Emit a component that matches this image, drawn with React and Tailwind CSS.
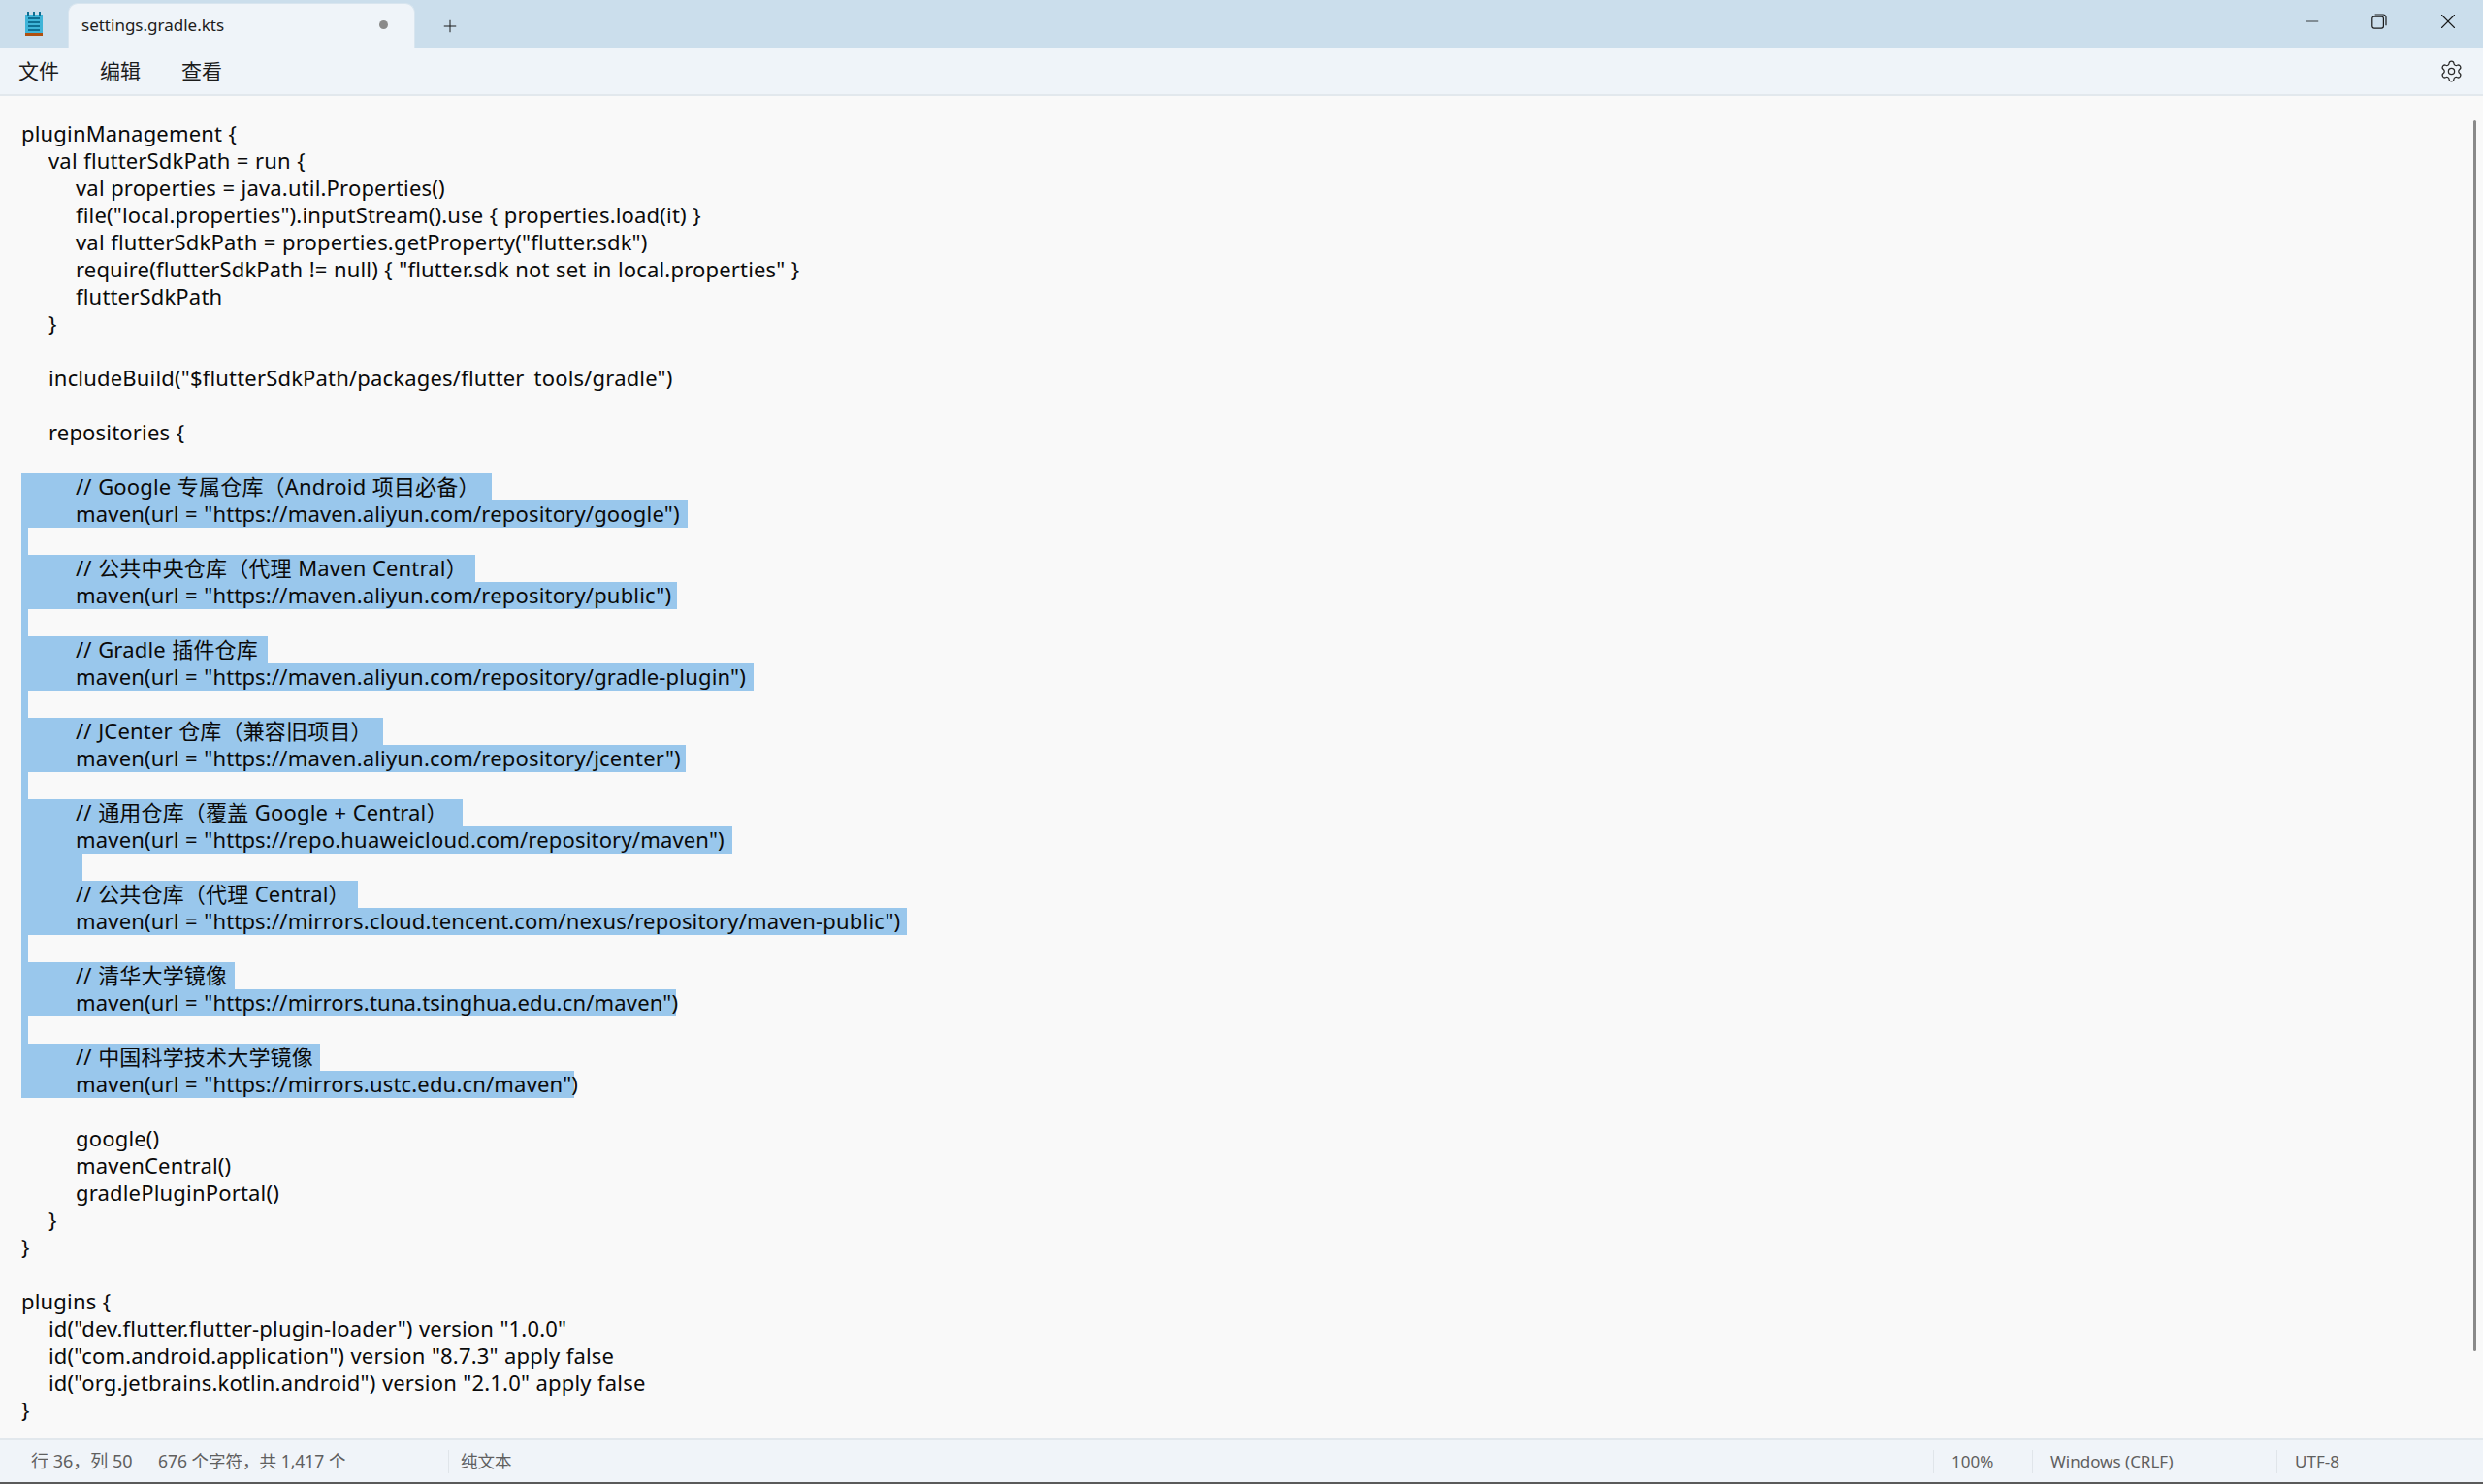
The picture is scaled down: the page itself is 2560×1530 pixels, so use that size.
import React from 'react'
import { Settings, Plus, X, Minus } from 'lucide-react'

const uiFont = "font-['Noto_Sans','Noto_Sans_CJK_SC',sans-serif]"

const firstLines = [
  ['', 'pluginManagement {'],
  ['pl-7', 'val flutterSdkPath = run {'],
  ['pl-14', 'val properties = java.util.Properties()'],
  ['pl-14', 'file("local.properties").inputStream().use { properties.load(it) }'],
  ['pl-14', 'val flutterSdkPath = properties.getProperty("flutter.sdk")'],
  ['pl-14', 'require(flutterSdkPath != null) { "flutter.sdk not set in local.properties" }'],
  ['pl-14', 'flutterSdkPath'],
  ['pl-7', '}'],
  ['', ''],
  [
    'pl-7',
    <>
      includeBuild("$flutterSdkPath/packages/flutter<span className="text-transparent">_</span>tools/gradle")
    </>,
  ],
  ['', ''],
  ['pl-7', 'repositories {'],
  ['', ''],
]

// selected block: the width of each line is the selection highlight in the screenshot
const selectedLines = [
  ['w-[485px]', '// Google 专属仓库（Android 项目必备）'],
  ['w-[687px]', 'maven(url = "https://maven.aliyun.com/repository/google")'],
  ['w-[7px]', ''],
  ['w-[468px]', '// 公共中央仓库（代理 Maven Central）'],
  ['w-[676px]', 'maven(url = "https://maven.aliyun.com/repository/public")'],
  ['w-[7px]', ''],
  ['w-[254px]', '// Gradle 插件仓库'],
  ['w-[755px]', 'maven(url = "https://maven.aliyun.com/repository/gradle-plugin")'],
  ['w-[7px]', ''],
  ['w-[373px]', '// JCenter 仓库（兼容旧项目）'],
  ['w-[685px]', 'maven(url = "https://maven.aliyun.com/repository/jcenter")'],
  ['w-[7px]', ''],
  ['w-[455px]', '// 通用仓库（覆盖 Google + Central）'],
  ['w-[733px]', 'maven(url = "https://repo.huaweicloud.com/repository/maven")'],
  ['w-[63px]', ''],
  ['w-[347px]', '// 公共仓库（代理 Central）'],
  ['w-[913px]', 'maven(url = "https://mirrors.cloud.tencent.com/nexus/repository/maven-public")'],
  ['w-[7px]', ''],
  ['w-[220px]', '// 清华大学镜像'],
  ['w-[675px]', 'maven(url = "https://mirrors.tuna.tsinghua.edu.cn/maven")'],
  ['w-[7px]', ''],
  ['w-[308px]', '// 中国科学技术大学镜像'],
  ['w-[570px]', 'maven(url = "https://mirrors.ustc.edu.cn/maven")'],
]

const lastLines = [
  ['', ''],
  ['pl-14', 'google()'],
  ['pl-14', 'mavenCentral()'],
  ['pl-14', 'gradlePluginPortal()'],
  ['pl-7', '}'],
  ['', '}'],
  ['', ''],
  ['', 'plugins {'],
  ['pl-7', 'id("dev.flutter.flutter-plugin-loader") version "1.0.0"'],
  ['pl-7', 'id("com.android.application") version "8.7.3" apply false'],
  ['pl-7', 'id("org.jetbrains.kotlin.android") version "2.1.0" apply false'],
  ['', '}'],
]

const NotepadIcon = () => (
  <svg width="20" height="26" viewBox="0 0 20 26">
    <rect x="1" y="3" width="18" height="19" fill="#3fb4d8" />
    <rect x="3" y="0" width="2" height="4" fill="#0f6f93" />
    <rect x="9" y="0" width="2" height="4" fill="#0f6f93" />
    <rect x="15" y="0" width="2" height="4" fill="#0f6f93" />
    <path d="M4 7h12M4 11h12M4 15h12M4 19h12" stroke="#0f6f93" strokeWidth="2" />
    <rect x="1" y="22" width="18" height="3" fill="#b0500f" />
  </svg>
)

const RestoreIcon = () => (
  <svg width="16" height="16" viewBox="0 0 16 16" fill="none" stroke="#1a1a1a" strokeWidth="1.2">
    <rect x="0.8" y="3.2" width="11.6" height="11.9" rx="2" />
    <path d="M3.6 1h8.2a3 3 0 0 1 3.2 3.2v8" />
  </svg>
)

const Separator = () => <div className="w-px h-6 bg-[#e0e5ea]" />

const App = () => {
  return (
    <div className={`w-[2560px] h-[1530px] flex flex-col overflow-hidden bg-[#f9f9f9] ${uiFont}`}>
      <div className="h-[49px] flex shrink-0 bg-[#cbdeec]">
        <div className="w-[70px] flex justify-center items-center pt-[1px]">
          <NotepadIcon />
        </div>
        <div className="w-[358px] mt-[3px] pl-[13px] pr-[27px] flex items-center justify-between rounded-t-[10px] bg-[#eff4f9] border-t border-x border-[#d8e5ef] text-[17px] text-[#1c1c1c]">
          <span className="mb-[2px]">settings.gradle.kts</span>
          <span className="w-[9px] h-[9px] mb-[3px] rounded-full bg-[#8a8a8a]" />
        </div>
        <div className="w-[72px] flex justify-center items-center pt-[4px]">
          <Plus size={20} strokeWidth={1.2} color="#1a1a1a" />
        </div>
        <div className="flex-1" />
        <div className="flex items-start">
          <div className="w-[68px] flex justify-center pt-[12px]">
            <Minus size={20} strokeWidth={1} color="#1a1a1a" />
          </div>
          <div className="w-[70px] flex justify-center pt-[14px]">
            <RestoreIcon />
          </div>
          <div className="w-[72px] flex justify-center pt-[9px]">
            <X size={26} strokeWidth={1} color="#1a1a1a" />
          </div>
        </div>
      </div>

      <div className="h-[50px] flex items-center shrink-0 pl-[19px] pr-[20px] pt-[1px] bg-[#eff4f9] border-b-2 border-[#e2e8ed] text-[21px] text-[#1c1c1c]">
        <span className="w-[84px]">文件</span>
        <span className="w-[84px]">编辑</span>
        <span>查看</span>
        <Settings size={25} strokeWidth={1.2} color="#2a2a2a" className="ml-auto" />
      </div>

      <div className="relative flex-1 pt-[25px] pl-[22px] text-[22px] leading-[26px] tracking-[0.18px] [word-spacing:0.5px] text-[#0a0a0a] whitespace-pre">
        {firstLines.map(([indent, text], i) => (
          <div key={i} className={`h-7 ${indent}`}>
            {text}
          </div>
        ))}
        {selectedLines.map(([width, text], i) => (
          <div key={i} className={`h-7 bg-[#99c7ec] ${width} ${text ? 'pl-14' : ''}`}>
            {text}
          </div>
        ))}
        {lastLines.map(([indent, text], i) => (
          <div key={i} className={`h-7 ${indent}`}>
            {text}
          </div>
        ))}
        <div className="absolute top-[25px] right-[7px] w-[3px] h-[1269px] rounded-full bg-[#8a8a8a]" />
      </div>

      <div className="h-[45px] flex items-center shrink-0 bg-[#f0f4f9] border-t-2 border-[#e2e8ed] text-[17px] text-[#5f5f5f]">
        <span className="w-[149px] pl-[32px] text-[18px]">行 36，列 50</span>
        <Separator />
        <span className="w-[312px] pl-[13px] text-[17.5px]">676 个字符，共 1,417 个</span>
        <Separator />
        <span className="w-[1530px] pl-[12px] text-[17.5px]">纯文本</span>
        <Separator />
        <span className="w-[101px] pl-[18px]">100%</span>
        <Separator />
        <span className="w-[251px] pl-[18px]">Windows (CRLF)</span>
        <Separator />
        <span className="pl-[18px]">UTF-8</span>
      </div>
      <div className="h-[2px] shrink-0 bg-[#5a5a5a]" />
    </div>
  )
}

export default App
